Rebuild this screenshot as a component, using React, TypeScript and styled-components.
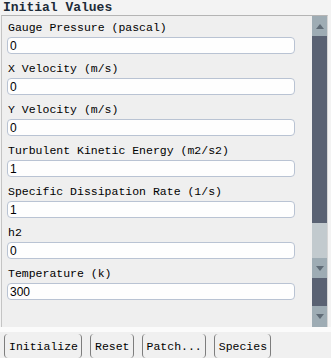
import React from 'react'
import styled, { createGlobalStyle } from 'styled-components'

interface Field {
  label: string
  value: string
}

const fields: Field[] = [
  { label: 'Gauge Pressure (pascal)', value: '0' },
  { label: 'X Velocity (m/s)', value: '0' },
  { label: 'Y Velocity (m/s)', value: '0' },
  { label: 'Turbulent Kinetic Energy (m2/s2)', value: '1' },
  { label: 'Specific Dissipation Rate (1/s)', value: '1' },
  { label: 'h2', value: '0' },
  { label: 'Temperature (k)', value: '300' },
]

const actions = ['Initialize', 'Reset', 'Patch...', 'Species']

function Arrow({ dir }: { dir: 'up' | 'down' }) {
  return (
    <svg width="8" height="5" viewBox="0 0 8 5">
      {dir === 'up' ? (
        <path d="M0 5 L4 0 L8 5 Z" fill="#5f6b76" />
      ) : (
        <path d="M0 0 L8 0 L4 5 Z" fill="#5f6b76" />
      )}
    </svg>
  )
}

function App() {
  return (
    <Page>
      <GlobalStyle />
      <Title>Initial Values</Title>
      <Panel>
        <FieldList>
          {fields.map(f => (
            <FieldRow key={f.label}>
              <Label>{f.label}</Label>
              <Input readOnly value={f.value} />
            </FieldRow>
          ))}
        </FieldList>
        <Scrollbar>
          <ScrollButton $height={20}>
            <Arrow dir="up" />
          </ScrollButton>
          <ScrollSegment $tone="dark" $height={187} />
          <ScrollSegment $tone="light" $height={35} />
          <ScrollButton $height={20}>
            <Arrow dir="down" />
          </ScrollButton>
          <ScrollSegment $tone="dark" $height={28} />
          <ScrollButton $height={24} $grow>
            <Arrow dir="down" />
          </ScrollButton>
        </Scrollbar>
      </Panel>
      <Divider />
      <ButtonBar>
        {actions.map(a => (
          <Button key={a}>{a}</Button>
        ))}
      </ButtonBar>
    </Page>
  )
}

export default App

const GlobalStyle = createGlobalStyle`
  html, body {
    margin: 0;
    padding: 0;
    background: #f3f3f3;
  }
`

const Page = styled.div`
  width: 331px;
  height: 358px;
  overflow: hidden;
  display: flex;
  flex-direction: column;
  font-family: 'Liberation Mono', 'DejaVu Sans Mono', monospace;
  color: #000;
`

const Title = styled.div`
  height: 15px;
  line-height: 15px;
  padding-left: 3px;
  font-size: 13px;
  font-weight: bold;
  color: #1d2b38;
`

const Panel = styled.div`
  margin-left: 1px;
  width: 327px;
  height: 315px;
  box-sizing: border-box;
  display: flex;
  background: #efefef;
  border-top: 1px solid #b4b4b4;
  border-left: 1px solid #c4c4c4;
  border-right: 1px solid #d6d6d6;
`

const FieldList = styled.div`
  flex: 1;
  padding-left: 5px;
  overflow: hidden;
`

const FieldRow = styled.div`
  display: flex;
  flex-direction: column;
`

const Label = styled.div`
  height: 24px;
  box-sizing: border-box;
  padding: 8px 0 0 1px;
  line-height: 14px;
  font-size: 11.5px;
  white-space: nowrap;

  ${FieldRow}:first-child & {
    height: 21px;
    padding-top: 5px;
  }
`

const Input = styled.input`
  width: 288px;
  height: 17px;
  box-sizing: border-box;
  margin: 0;
  padding: 1px 2px 0;
  border: 1px solid #b9c3d3;
  border-radius: 4px;
  background: #fefefe;
  font-family: 'Liberation Sans', Arial, sans-serif;
  font-size: 12px;
  color: #000;
  outline: none;
`

const Scrollbar = styled.div`
  width: 15px;
  display: flex;
  flex-direction: column;
`

const ScrollButton = styled.div<{ $height: number; $grow?: boolean }>`
  height: ${p => p.$height}px;
  flex: ${p => (p.$grow ? '1' : 'none')};
  display: flex;
  align-items: center;
  justify-content: center;
  background: #9eacb4;
`

const ScrollSegment = styled.div<{ $tone: 'dark' | 'light'; $height: number }>`
  height: ${p => p.$height}px;
  flex: none;
  background: ${p => (p.$tone === 'dark' ? '#5a6273' : '#c2cace')};
`

const Divider = styled.div`
  height: 5px;
  background: #fbfbfb;
`

const ButtonBar = styled.div`
  display: flex;
  gap: 8px;
  padding: 2px 0 0 4px;
  background: #f0f0f0;
  flex: 1;
`

const Button = styled.div`
  height: 24px;
  box-sizing: border-box;
  padding: 6px 3px 0 4px;
  line-height: 14px;
  font-size: 11.5px;
  border-left: 1px solid #7d7d7d;
  border-right: 1px solid #7d7d7d;
  border-radius: 4px;
  white-space: nowrap;
`
